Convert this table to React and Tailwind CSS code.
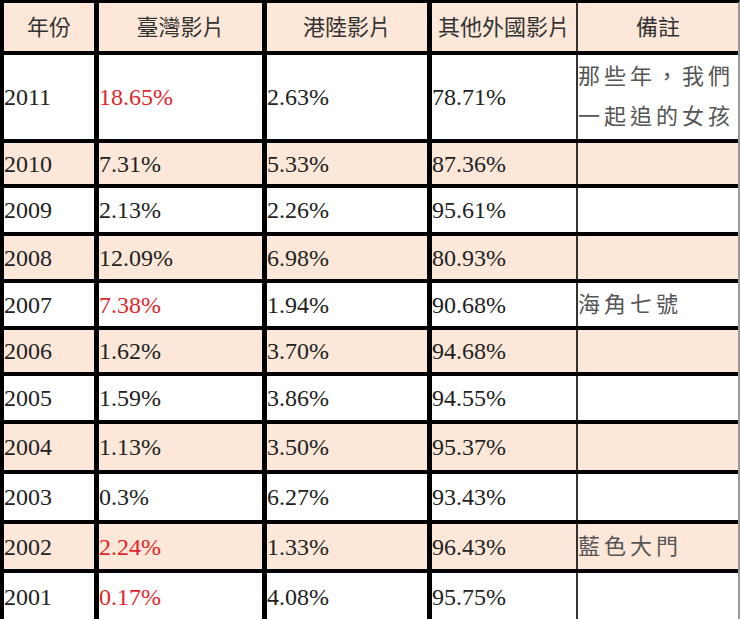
import React from "react";

const rows = [
  { y: "2011", a: "18.65%", aRed: true, b: "2.63%", c: "78.71%", note: ["那些年，我們", "一起追的女孩"], h: "h-[88px]", peach: false },
  { y: "2010", a: "7.31%", b: "5.33%", c: "87.36%", h: "h-[45px]", peach: true },
  { y: "2009", a: "2.13%", b: "2.26%", c: "95.61%", h: "h-[48px]", peach: false },
  { y: "2008", a: "12.09%", b: "6.98%", c: "80.93%", h: "h-[47px]", peach: true },
  { y: "2007", a: "7.38%", aRed: true, b: "1.94%", c: "90.68%", note: ["海角七號"], h: "h-[47px]", peach: false },
  { y: "2006", a: "1.62%", b: "3.70%", c: "94.68%", h: "h-[46px]", peach: true },
  { y: "2005", a: "1.59%", b: "3.86%", c: "94.55%", h: "h-[48px]", peach: false },
  { y: "2004", a: "1.13%", b: "3.50%", c: "95.37%", h: "h-[50px]", peach: true },
  { y: "2003", a: "0.3%", b: "6.27%", c: "93.43%", h: "h-[50px]", peach: false },
  { y: "2002", a: "2.24%", aRed: true, b: "1.33%", c: "96.43%", note: ["藍色大門"], h: "h-[49px]", peach: true },
  { y: "2001", a: "0.17%", aRed: true, b: "4.08%", c: "95.75%", h: "h-[49px]", peach: false },
];

function Row({ r, last }) {
  const bg = r.peach ? "bg-[#fce7d9]" : "bg-white";
  return (
    <div className={`flex ${r.h} ${last ? "border-b-2" : "border-b-4"} border-black`}>
      <div className={`w-[95px] shrink-0 ${bg} flex items-center text-[24px] text-[#222] border-r-[5px] border-black`}>{r.y}</div>
      <div className={`w-[168px] shrink-0 ${bg} flex items-center text-[24px] ${r.aRed ? "text-[#e3242b]" : "text-[#222]"} border-r-[5px] border-black`}>{r.a}</div>
      <div className={`w-[165px] shrink-0 ${bg} flex items-center text-[24px] text-[#222] border-r-[5px] border-black`}>{r.b}</div>
      <div className={`w-[146px] shrink-0 ${bg} flex items-center text-[24px] text-[#222] border-r-2 border-[#333]`}>{r.c}</div>
      <div className={`flex-1 ${bg} flex flex-col justify-center text-[22px] leading-[40px] tracking-[4px] text-[#555]`}>
        {r.note && r.note.map((t) => <span key={t} className="whitespace-nowrap">{t}</span>)}
      </div>
    </div>
  );
}

export default function App() {
  return (
    <div className="w-[740px] h-[619px] bg-white font-['Liberation_Serif','Noto_Sans_CJK_TC',serif]">
      <div className="w-[740px] border-t-[3px] border-l-4 border-r-2 border-l-black border-t-black border-r-[#999]">
        <div className="flex h-[52px] border-b-4 border-black bg-[#fce7d9] text-[22px] text-[#333]">
          <div className="w-[95px] shrink-0 flex items-center justify-center border-r-[5px] border-black">年份</div>
          <div className="w-[168px] shrink-0 flex items-center justify-center border-r-[5px] border-black">臺灣影片</div>
          <div className="w-[165px] shrink-0 flex items-center justify-center border-r-[5px] border-black">港陸影片</div>
          <div className="w-[146px] shrink-0 flex items-center justify-center border-r-2 border-[#333]">其他外國影片</div>
          <div className="flex-1 flex items-center justify-center">備註</div>
        </div>
        {rows.map((r, i) => (
          <Row key={r.y} r={r} last={i === rows.length - 1} />
        ))}
      </div>
    </div>
  );
}
